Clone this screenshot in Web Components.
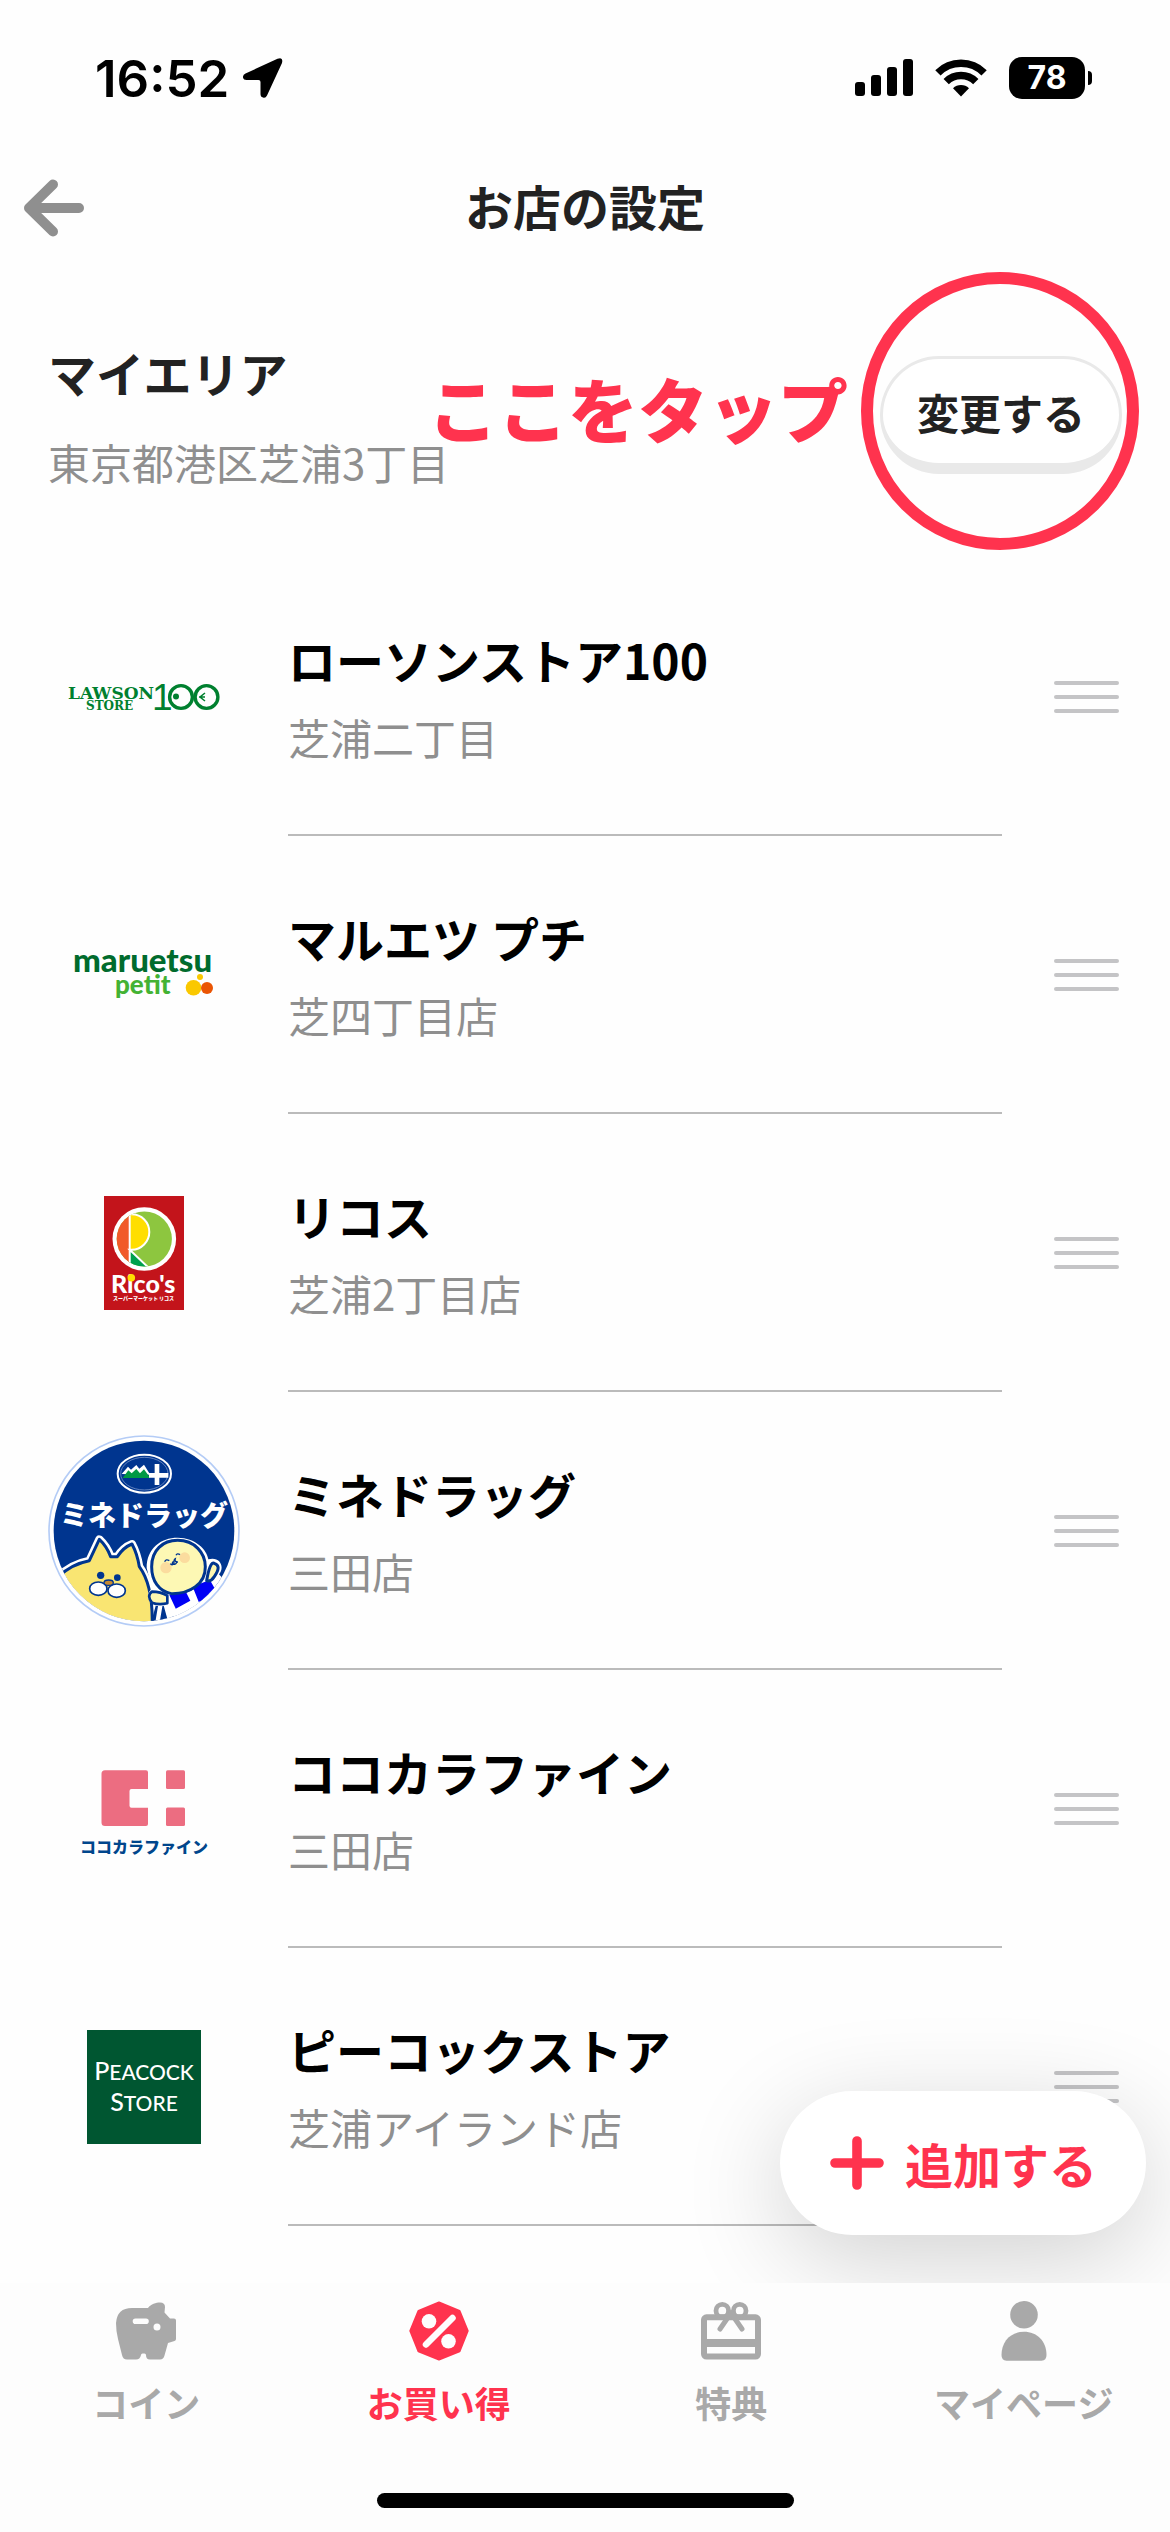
<!DOCTYPE html>
<html lang="ja">
<head>
<meta charset="utf-8">
<meta name="viewport" content="width=device-width, initial-scale=1">
<title>お店の設定</title>
<style>
  body {
    margin: 0;
    background: #fefefe;
    color: #222;
    font-family: "Noto Sans CJK JP", sans-serif;
  }
  .logo {
    display: block;
    width: 192px;
    height: 192px;
  }
  .icon {
    display: block;
    width: 60px;
    height: 60px;
  }
</style>
</head>
<body>
<my-app>
  <my-status-bar slot="top" data-time="16:52" data-battery="78"></my-status-bar>
  <my-header slot="top">お店の設定</my-header>
  <my-area slot="top" data-address="東京都港区芝浦3丁目" data-hint="ここをタップ">マイエリア</my-area>

  <my-store data-name="ローソンストア100" data-branch="芝浦二丁目">
    <svg class="logo" viewBox="0 0 192 192" fill="#00802f">
      <text x="20" y="98" font-family="DejaVu Serif" font-size="17" font-weight="700">LAWSON</text>
      <text x="38" y="109" font-family="DejaVu Serif" font-size="12" font-weight="700">STORE</text>
      <text x="104" y="109" font-family="Liberation Sans" font-size="37">1</text>
      <g fill="none" stroke="#00802f" stroke-width="3.4">
        <circle cx="133" cy="96" r="11.4"/>
        <circle cx="158.5" cy="96" r="11.4"/>
        <path d="M157 92l-5 4 5 4M151 96h6" stroke-width="1.6"/>
      </g>
      <circle cx="128" cy="95.5" r="3"/>
    </svg>
  </my-store>

  <my-store data-name="マルエツ プチ" data-branch="芝四丁目店">
    <svg class="logo" viewBox="0 0 192 192">
      <text x="25" y="93" font-family="Lato" font-size="33" font-weight="900" fill="#006b2d">maruetsu</text>
      <text x="67" y="115" font-family="Lato" font-size="26" font-weight="900" fill="#43b233">petit</text>
      <circle cx="145.5" cy="108.7" r="7.8" fill="#fac800"/>
      <circle cx="152" cy="98" r="3" fill="#fac800"/>
      <circle cx="159" cy="109" r="6" fill="#ea5504"/>
    </svg>
  </my-store>

  <my-store data-name="リコス" data-branch="芝浦2丁目店">
    <svg class="logo" viewBox="0 0 192 192">
      <clipPath id="ricos-disc"><circle cx="96.3" cy="82" r="27.6"/></clipPath>
      <path d="M56 39h80v114H56z" fill="#c3141b"/>
      <circle cx="96.3" cy="82" r="31.8" fill="#fff"/>
      <g clip-path="url(#ricos-disc)">
        <path d="M60 50h72v64H60z" fill="#8dc63f"/>
        <path d="M60 50h21.7v64H60z" fill="#f15a29"/>
        <path d="M81.7 93.5L104 114H81.7z" fill="#00a04e"/>
        <path d="M81.7 57.3h2c10 0 17.6 8 17.6 17.7s-8 17.8-17.6 17.8h-2z" fill="#ffde00"/>
        <path d="M81.7 50v64M81.7 57.3h2c10 0 17.6 8 17.6 17.7s-8 17.8-17.6 17.8h-2L104 114" fill="none" stroke="#fff" stroke-width="2"/>
      </g>
      <text x="63" y="136" font-family="Lato" font-size="25" font-weight="900" fill="#fff">Rico's</text>
      <circle cx="83.3" cy="120.7" r="3.8" fill="#ffde00"/>
      <text x="65" y="143" font-family="Noto Sans CJK JP" font-size="5" font-weight="900" fill="#fff">スーパーマーケット リコス</text>
    </svg>
  </my-store>

  <my-store data-name="ミネドラッグ" data-branch="三田店">
    <svg class="logo" viewBox="0 0 192 192">
      <g transform="translate(-18 -25) scale(.3333)">
        <clipPath id="mine-disc"><circle cx="342" cy="363" r="271"/></clipPath>
        <circle cx="342" cy="363" r="285" fill="#fff" stroke="#b4ccf6" stroke-width="5"/>
        <circle cx="342" cy="363" r="271" fill="#00358f"/>
        <ellipse cx="343" cy="191" rx="80" ry="57" fill="#00358f" stroke="#fff" stroke-width="6"/>
        <ellipse cx="343" cy="191" rx="71" ry="49" fill="none" stroke="#8fa6d4" stroke-width="2"/>
        <path d="M275 192l19-22 9 9 16-14 9 11 14-12 19 30z" fill="#fff"/>
        <path d="M278 204l17-23 10 9 14-13 11 13 12-12 19 26z" fill="#009944"/>
        <path d="M374 162h14v27h27v14h-27v22h-14v-22h-17v-14h17z" fill="#fff"/>
        <g clip-path="url(#mine-disc)" stroke-linejoin="round">
          <path d="M85 500Q125 462 178 452L208 388Q230 408 242 440H262Q280 412 306 402Q322 432 328 470Q372 530 366 660H85z" fill="#fff" stroke="#fff" stroke-width="24"/>
          <path d="M85 500Q125 462 178 452L208 388Q230 408 242 440H262Q280 412 306 402Q322 432 328 470Q372 530 366 660H85z" fill="#f9e572" stroke="#00358f" stroke-width="9"/>
          <path d="M350 474C350 414 393 383 443 383 496 383 531 419 535 448 569 438 586 470 567 493L590 518 555 600 372 660V583C349 576 350 544 366 537z" fill="#fff"/>
          <path d="M377 588l-17 60h60l-15-60z" fill="#00358f"/>
          <path d="M391 586l-10 60M407 584l14 50" stroke="#fff" stroke-width="13"/>
          <path d="M418 555l122-45 22 40-120 56z" fill="#0000f5"/>
          <path d="M469 548l22-10 18 45 60-32-4 42-120 54-20-44 56-31z" fill="#fff"/>
          <path d="M530 512Q540 453 553 460Q576 467 553 500Q542 517 530 512z" fill="#fdf7b0" stroke="#00358f" stroke-width="9"/>
          <path d="M365 470C365 421 398 391 443 391 494 391 526 429 526 470 527 521 480 552 424 551 387 544 365 513 365 470z" fill="#fdf8b4" stroke="#00358f" stroke-width="9"/>
          <path d="M366 545Q392 545 412 557V580Q386 586 366 578Q349 558 366 545z" fill="#fdf7b0" stroke="#00358f" stroke-width="8"/>
        </g>
        <circle cx="408" cy="473" r="17" fill="#fbdc9e"/>
        <circle cx="464" cy="443" r="16" fill="#fbdc9e"/>
        <path d="M404 455q4-9 14-3M438 436q4-8 12-2M421 461q5 7 11-1-1-12 4-14-3 11 8 10M430 454q-8 10 4 9 8-3 5-10" fill="none" stroke="#00358f" stroke-width="4"/>
        <circle cx="212" cy="496" r="11" fill="#00358f"/>
        <circle cx="262" cy="503" r="10" fill="#00358f"/>
        <ellipse cx="205" cy="536" rx="26" ry="20" fill="#fff" stroke="#00358f" stroke-width="5"/>
        <ellipse cx="260" cy="542" rx="26" ry="20" fill="#fff" stroke="#00358f" stroke-width="5"/>
        <ellipse cx="236" cy="518" rx="14" ry="8" fill="#c58a32" stroke="#00358f" stroke-width="4"/>
      </g>
      <text x="12" y="91" font-family="Noto Sans CJK JP" font-size="28" font-weight="900" fill="#fff">ミネドラッグ</text>
    </svg>
  </my-store>

  <my-store data-name="ココカラファイン" data-branch="三田店">
    <svg class="logo" viewBox="0 0 192 192">
      <g fill="#ec6d81">
        <path d="M57 57.3h41q2 0 2 2V76H83.500q-2 0-2 2v14.800q0 2 2 2H100V111q0 2-2 2H57q-3.500 0-3.500-3.500v-48.700q0-3.500 3.500-3.500z"/>
        <rect x="118" y="57.300" width="19" height="18.700" rx="1.500"/>
        <rect x="118" y="94.500" width="19" height="18.500" rx="1.500"/>
      </g>
      <text x="32" y="140" font-family="Noto Sans CJK JP" font-size="16" font-weight="900" fill="#00468c">ココカラファイン</text>
    </svg>
  </my-store>

  <my-store data-name="ピーコックストア" data-branch="芝浦アイランド店">
    <svg class="logo" viewBox="0 0 192 192">
      <path d="M39 39h114v114H39z" fill="#005631"/>
      <g font-family="Lato" font-size="21" font-weight="500" fill="#fff" text-anchor="middle">
        <text x="96" y="89"><tspan font-size="25">P</tspan>EACOCK</text>
        <text x="96" y="120"><tspan font-size="25">S</tspan>TORE</text>
      </g>
    </svg>
  </my-store>

  <my-add-button slot="float">追加する</my-add-button>

  <my-tab-bar slot="bottom">
    <my-tab data-label="コイン">
      <svg class="icon" viewBox="0 0 60 60" fill="currentColor">
        <path fill-rule="evenodd" d="M16 7h16C35 3 40 1.500 44 1.500q5 0 5 4.500l-.5 5.500 5.500 6h4q2 0 2 2V38q0 1.500-1.500 2L52 42l-3.500 12.500q-1 4-4.500 4H34q-4 0-4-4.500 0-1.500-1.500-1.500h-2Q25 52.500 25 54q-1 4.500-5 4.500h-9q-4 0-5-4.500L2 38Q0 30 0 22 1 7 16 7zM19.500 17.500a2.800 2.800 0 0 0 0 5.600h10.500a2.800 2.800 0 0 0 0-5.600zM41 22.500a3.500 3.500 0 1 0 0 7 3.500 3.500 0 0 0 0-7z"/>
      </svg>
    </my-tab>
    <my-tab data-label="お買い得" data-current>
      <svg class="icon" viewBox="0 0 60 60" fill="currentColor">
        <path d="M30 1.500l20.500 8.500L58.700 30l-8.200 20.300L30 58.600 9.500 50.300 1.300 30 9.500 10z" stroke="currentColor" stroke-width="2" stroke-linejoin="round"/>
        <circle cx="20" cy="20.300" r="7.300" fill="#fdfdfd"/>
        <circle cx="39.500" cy="40.300" r="7.300" fill="#fdfdfd"/>
        <path d="M17 43.500L43.500 17" stroke="#fdfdfd" stroke-width="6.500" stroke-linecap="round"/>
      </svg>
    </my-tab>
    <my-tab data-label="特典">
      <svg class="icon" viewBox="0 0 60 60" fill="none" stroke="currentColor" stroke-linecap="round">
        <rect x="3" y="16.300" width="54" height="39.200" rx="2.500" stroke-width="6"/>
        <path d="M4 42h52" stroke-width="8" stroke-linecap="butt"/>
        <circle cx="21.300" cy="9.700" r="6.300" stroke-width="4.800"/>
        <circle cx="38.700" cy="9.700" r="6.300" stroke-width="4.800"/>
        <path d="M30 12L19 28M30 12l11 16" stroke-width="5"/>
      </svg>
    </my-tab>
    <my-tab data-label="マイページ">
      <svg class="icon" viewBox="0 0 60 60" fill="currentColor">
        <circle cx="30" cy="13.800" r="13.800"/>
        <path d="M7.500 54C7.500 40 17 30.700 30 30.700S52.500 40 52.500 54q0 5.700-5 5.700h-35q-5 0-5-5.700z"/>
      </svg>
    </my-tab>
  </my-tab-bar>
</my-app>

<script>
// clones the markup into an open shadow root and returns it
function attach(host, html) {
  const template = document.createElement("template");
  template.innerHTML = html;
  const shadow = host.attachShadow({ mode: "open" });
  shadow.append(template.content.cloneNode(true));
  return shadow;
}

class MyApp extends HTMLElement {
  constructor() {
    super();
    attach(this, `
<style>
:host {
  display: flex;
  flex-direction: column;
  min-height: 100vh;
}
main {
  flex: 1;
}
.bottom {
  position: relative;
}
/* keeps the button's shadow from falling on the tab bar */
.clip {
  position: absolute;
  left: 0;
  right: 0;
  bottom: 100%;
  height: 400px;
  overflow: hidden;
  pointer-events: none;
}
.float {
  position: absolute;
  right: 24px;
  bottom: 48px;
  pointer-events: auto;
}
</style>
<slot name="top"></slot>
<main><slot></slot></main>
<div class="bottom">
  <div class="clip"><div class="float"><slot name="float"></slot></div></div>
  <slot name="bottom"></slot>
</div>
`);
  }
}

class MyStatusBar extends HTMLElement {
  constructor() {
    super();
    attach(this, `
<style>
:host {
  display: flex;
  align-items: center;
  justify-content: space-between;
  height: 156px;
  padding: 0 78px 0 95px;
  color: #000;
  font-family: Inter, sans-serif;
  font-weight: 600;
}
.left, .right {
  display: flex;
  align-items: center;
}
.left {
  gap: 14px;
  font-size: 51px;
}
.right {
  gap: 22px;
}
svg {
  display: block;
}
.battery {
  display: flex;
  align-items: center;
  gap: 3px;
}
.level {
  width: 76px;
  height: 42px;
  border-radius: 13px;
  background: #000;
  color: #fff;
  font-size: 32px;
  font-weight: 700;
  line-height: 42px;
  text-align: center;
}
.nub {
  width: 4px;
  height: 14px;
  border-radius: 0 4px 4px 0;
  background: #000;
}
</style>
<div class="left">
  <span id="time"></span>
  <svg width="40" height="40" viewBox="0 0 40 40"><path d="M34.500.8Q40.500-1.500 39 5L24 37.500Q22.500 40.500 20 39.500 17.500 39 17.500 36V24Q17.500 22 15.500 22H3.500Q.5 22 0 19.500-.3 17 2.500 15.500z"/></svg>
</div>
<div class="right">
  <svg width="58" height="38" viewBox="0 0 58 38"><rect y="23" width="10" height="14" rx="3"/><rect x="16" y="16" width="10" height="21" rx="3"/><rect x="32" y="8" width="10" height="29" rx="3"/><rect x="48" width="10" height="37" rx="3"/></svg>
  <svg width="52" height="38" viewBox="0 0 52 38"><path d="M2.900 13.900A32.700 32.700 0 0 1 49.100 13.900M11.200 22.700A21 21 0 0 1 40.800 22.700" fill="none" stroke="#000" stroke-width="7.500"/><path d="M26 37.500l-8-8.300a11.500 11.500 0 0 1 16 0z"/></svg>
  <div class="battery"><span class="level"></span><span class="nub"></span></div>
</div>
`);
  }

  connectedCallback() {
    this.shadowRoot.querySelector("#time").textContent = this.dataset.time;
    this.shadowRoot.querySelector(".level").textContent = this.dataset.battery;
  }
}

class MyHeader extends HTMLElement {
  constructor() {
    super();
    attach(this, `
<style>
:host {
  display: grid;
  grid-template-columns: 108px 1fr 108px;
  align-items: center;
  height: 104px;
}
button {
  display: block;
  padding: 0 24px;
  border: 0;
  background: none;
  color: #8f8f8f;
}
svg {
  display: block;
}
h1 {
  margin: 0;
  padding-bottom: 6px;
  font-size: 48px;
  line-height: 72px;
  font-weight: 700;
  text-align: center;
}
</style>
<button type="button" aria-label="戻る">
  <svg width="60" height="60" viewBox="0 0 60 60" fill="none" stroke="currentColor" stroke-width="10" stroke-linecap="round" stroke-linejoin="round"><path d="M5 30h50M29 6.500L5 30l24 23.500"/></svg>
</button>
<h1><slot></slot></h1>
`);
  }
}

class MyArea extends HTMLElement {
  constructor() {
    super();
    attach(this, `
<style>
:host {
  display: flex;
  align-items: center;
  justify-content: space-between;
  padding: 76px 48px 64px;
}
h2, p {
  margin: 0;
}
h2 {
  font-size: 48px;
  line-height: 72px;
  font-weight: 700;
}
p {
  margin-top: 22px;
  color: #8f8f8f;
  font-size: 42px;
  line-height: 64px;
}
.action {
  position: relative;
}
button {
  display: block;
  padding: 23px 34px 21px;
  border: 3px solid #e9e9e9;
  border-bottom-width: 11px;
  border-radius: 60px;
  background: #fff;
  color: #222;
  font: inherit;
  font-size: 42px;
  line-height: 60px;
  font-weight: 700;
}
/* callout drawn over the button */
.ring {
  position: absolute;
  top: 50%;
  left: 50%;
  width: 254px;
  height: 254px;
  margin: -143px 0 0 -140px;
  border: 12px solid #ff334e;
  border-radius: 50%;
  pointer-events: none;
}
.hint {
  position: absolute;
  right: calc(100% + 32px);
  top: 0;
  color: #ff334e;
  font-size: 70px;
  line-height: 104px;
  font-weight: 900;
  white-space: nowrap;
}
</style>
<div>
  <h2><slot></slot></h2>
  <p></p>
</div>
<div class="action">
  <button type="button">変更する</button>
  <span class="hint"></span>
  <span class="ring"></span>
</div>
`);
  }

  connectedCallback() {
    this.shadowRoot.querySelector("p").textContent = this.dataset.address;
    this.shadowRoot.querySelector(".hint").textContent = this.dataset.hint;
  }
}

class MyStore extends HTMLElement {
  constructor() {
    super();
    attach(this, `
<style>
:host {
  display: grid;
  grid-template-columns: 192px 1fr 168px;
  align-items: center;
  padding-left: 48px;
}
.info {
  margin-left: 48px;
  padding: 65px 0;
  border-bottom: 2px solid #bbb;
}
h3, p {
  margin: 0;
}
h3 {
  color: #000;
  font-size: 48px;
  line-height: 72px;
  font-weight: 700;
}
p {
  margin-top: 10px;
  color: #8f8f8f;
  font-size: 42px;
  line-height: 64px;
}
button {
  justify-self: center;
  display: flex;
  flex-direction: column;
  gap: 10px;
  width: 65px;
  padding: 0;
  border: 0;
  background: none;
}
i {
  width: 100%;
  height: 4px;
  border-radius: 2px;
  background: #c4c4c6;
}
</style>
<slot></slot>
<div class="info">
  <h3></h3>
  <p></p>
</div>
<button type="button" aria-label="並べ替え"><i></i><i></i><i></i></button>
`);
  }

  connectedCallback() {
    this.shadowRoot.querySelector("h3").textContent = this.dataset.name;
    this.shadowRoot.querySelector("p").textContent = this.dataset.branch;
  }
}

class MyAddButton extends HTMLElement {
  constructor() {
    super();
    attach(this, `
<style>
:host {
  display: block;
}
button {
  display: flex;
  align-items: center;
  gap: 21px;
  height: 144px;
  padding: 0 49px 0 50px;
  border: 0;
  border-radius: 72px;
  background: #fff;
  box-shadow: 0 24px 100px rgba(0, 0, 0, 0.18);
  color: #ff334e;
  font: inherit;
  font-size: 48px;
  line-height: 72px;
  font-weight: 700;
}
svg {
  display: block;
}
</style>
<button type="button">
  <svg width="54" height="54" viewBox="0 0 54 54" stroke="currentColor" stroke-width="9.600" stroke-linecap="round"><path d="M27 5v44M5 27h44"/></svg>
  <slot></slot>
</button>
`);
  }
}

class MyTabBar extends HTMLElement {
  constructor() {
    super();
    attach(this, `
<style>
:host {
  display: block;
  padding: 18px 0 24px;
  background: #fdfdfd;
}
nav {
  display: grid;
  grid-template-columns: repeat(4, 1fr);
}
.home {
  width: 417px;
  height: 15px;
  margin: 64px auto 0;
  border-radius: 8px;
  background: #000;
}
</style>
<nav><slot></slot></nav>
<div class="home"></div>
`);
  }
}

class MyTab extends HTMLElement {
  constructor() {
    super();
    attach(this, `
<style>
:host {
  display: block;
}
a {
  display: flex;
  flex-direction: column;
  align-items: center;
  gap: 14px;
  color: #a9a9a9;
  font-size: 36px;
  line-height: 54px;
  font-weight: 700;
  text-decoration: none;
}
:host([data-current]) a {
  color: #ff334e;
}
</style>
<a href="#"><slot></slot><span></span></a>
`);
  }

  connectedCallback() {
    this.shadowRoot.querySelector("span").textContent = this.dataset.label;
  }
}

customElements.define("my-app", MyApp);
customElements.define("my-status-bar", MyStatusBar);
customElements.define("my-header", MyHeader);
customElements.define("my-area", MyArea);
customElements.define("my-store", MyStore);
customElements.define("my-add-button", MyAddButton);
customElements.define("my-tab-bar", MyTabBar);
customElements.define("my-tab", MyTab);
</script>
</body>
</html>
